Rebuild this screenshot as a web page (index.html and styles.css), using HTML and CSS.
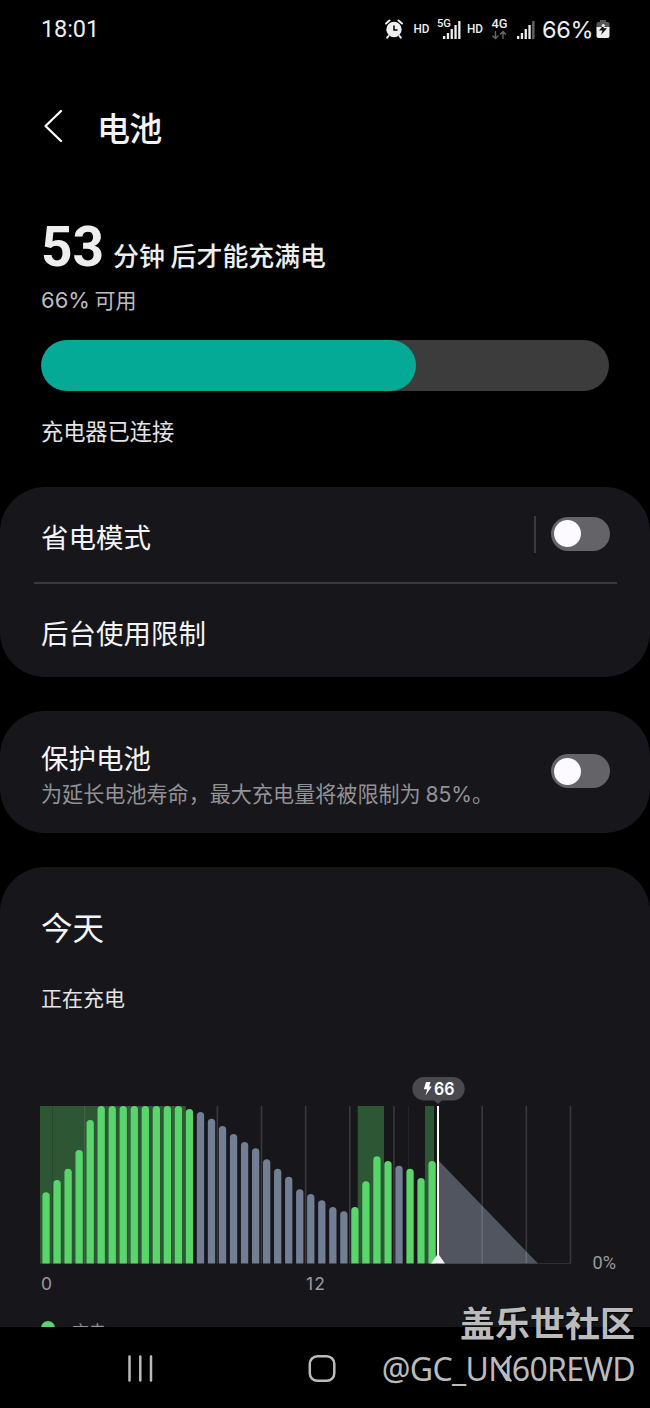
FILE: index.html
```html
<!DOCTYPE html>
<html lang="zh-CN">
<head>
<meta charset="utf-8">
<title>电池</title>
<link rel="stylesheet" href="styles.css">
</head>
<body>
<div class="screen">
  <header class="status">
    <span class="clock">18:01</span>
    <svg class="status-icons" width="156" height="30" viewBox="384 14 156 30">
      <g fill="none" stroke="#eee" stroke-width="2" stroke-linecap="round">
        <path d="M386 23.500l3.500-3M402 23.500l-3.500-3M388.500 36l-1.300 1.700M399.500 36l1.300 1.700"/>
      </g>
      <circle cx="394" cy="29.500" r="7.700" fill="#eee"/>
      <path d="M394 25.500v4.500h3.500" fill="none" stroke="#000" stroke-width="1.5"/>
      <g class="net">
        <text x="413.500" y="33" font-size="12" textLength="16" lengthAdjust="spacingAndGlyphs">HD</text>
        <text x="437" y="27" font-size="11" textLength="14" lengthAdjust="spacingAndGlyphs">5G</text>
        <text x="467" y="33" font-size="12" textLength="16" lengthAdjust="spacingAndGlyphs">HD</text>
        <text x="491.500" y="28" font-size="12.500" textLength="16" lengthAdjust="spacingAndGlyphs">4G</text>
      </g>
      <path d="M443 36h2.300v3h-2.300zM446.800 33h2.300v6h-2.300zM450.600 29h2.300v10h-2.300zM454.400 25h2.300v14h-2.300zM458.200 21h2.300v18h-2.300z" fill="#eee"/>
      <path d="M517 36h2.300v3H517zM520.800 33h2.300v6h-2.300zM524.600 29h2.300v10h-2.300zM528.400 25h2.300v14h-2.300z" fill="#eee"/>
      <path d="M532.200 21h2.300v18h-2.300z" fill="#666"/>
      <path d="M495.500 31v7.500m-3-3 3 3 3-3M503 39v-7.500m-3 3 3-3 3 3" fill="none" stroke="#666" stroke-width="1.4"/>
    </svg>
    <span class="percent">66%</span>
    <svg class="batt" width="14" height="20" viewBox="0 0 14 20">
      <path d="M4 1h6v2h1.500Q13.500 3 13.500 5v5H.500V5Q.500 3 2.500 3H4z" fill="#555"/>
      <path d="M.500 8h13v9q0 2-2 2h-9q-2 0-2-2z" fill="#eee"/>
      <path d="M8.500 5 3 11.500h3.500L5 16l6-6.800H7.500z" fill="#111"/>
      <circle cx="7.300" cy="6.500" r="1.600" fill="#eee"/>
    </svg>
  </header>

  <div class="title-bar">
    <svg width="22" height="36" viewBox="0 0 22 36"><path d="M19 3 3.500 18 19 33" fill="none" stroke="#fff" stroke-width="2.300" stroke-linecap="round" stroke-linejoin="round"/></svg>
    <h1>电池</h1>
  </div>

  <section class="summary">
    <div class="remaining"><b>53</b><span>分钟 后才能充满电</span></div>
    <div class="available"><span class="latin">66%</span> 可用</div>
    <div class="meter"><div class="meter-fill" style="width:66%"></div></div>
    <div class="charger">充电器已连接</div>
  </section>

  <section class="card">
    <div class="row">
      <span class="label">省电模式</span>
      <span class="split"></span>
      <span class="switch"></span>
    </div>
    <hr>
    <div class="row second"><span class="label">后台使用限制</span></div>
  </section>

  <section class="card protect">
    <div class="protect-text">
      <div class="label">保护电池</div>
      <div class="note">为延长电池寿命，最大充电量将被限制为 <span class="latin">85%</span>。</div>
    </div>
    <span class="switch"></span>
  </section>

  <section class="card today">
    <h2>今天</h2>
    <p>正在充电</p>
    <svg class="chart" width="650" height="230" viewBox="0 1070 650 230">
      <g class="grid" id="grid"></g>
      <path class="zone" d="M40 1106h145v157.500H40zM357.700 1106h26.300v157.500h-26.300zM425 1106h9v157.500h-9z"/>
      <path d="M52.500 1106v157.500M185.500 1106v157.500" stroke="#244a2b"/>
      <path d="M84.700 1106v157.500M129 1106v157.500M173 1106v157.500" stroke="#46664b"/>
      <path d="M408.500 1106v157.500" stroke="#24231f"/>
      <path d="M438 1263.500h133" stroke="#303034"/>
      <path d="M438 1160 538 1263.500H438z" fill="#51555f"/>
      <path d="M482.200 1206v57.500M526.300 1252v11" stroke="#6a6d76" stroke-width="1.500"/>
      <g id="bars"></g>
      <path d="M438 1106v157" stroke="#fff" stroke-width="2"/>
      <path d="M438 1253.500 445 1263.500H431z" fill="#f2f2f6"/>
      <path d="M424 1077h29a11.700 11.700 0 0 1 0 23.400h-11l-4 3.600-4-3.600h-10a11.700 11.700 0 0 1 0-23.400z" fill="#4a4a4e"/>
      <path d="M426 1082h4.500l-1.300 4.500h2.600l-6.300 9 1.700-6.300h-3.400z" fill="#fff"/>
      <text x="434" y="1095" class="bubble" textLength="20.500" lengthAdjust="spacingAndGlyphs">66</text>
      <text x="41" y="1290" class="axis">0</text>
      <text x="306" y="1290" class="axis" textLength="19">12</text>
      <text x="592.500" y="1269" class="axis pct" textLength="23.500" lengthAdjust="spacingAndGlyphs">0%</text>
    </svg>
    <div class="legend"><i></i><span>充电</span></div>
  </section>

  <nav>
    <svg width="650" height="81" viewBox="0 1327 650 81" fill="none" stroke="#bbb" stroke-width="2.500" stroke-linecap="round">
      <path d="M129.500 1356.500v24M140.300 1356.500v24M151 1356.500v24"/>
      <rect x="309.800" y="1356.300" width="24.500" height="24.500" rx="7.500"/>
      <path d="M510.500 1356.500 500 1368.500 510.500 1380.500" stroke-linejoin="round"/>
    </svg>
  </nav>

  <div class="watermark">
    <div class="community">盖乐世社区</div>
    <div class="handle">@GC_UN60REWD</div>
  </div>
</div>
<script src="chart.js"></script>
</body>
</html>
```

FILE: styles.css
```css
* { box-sizing: border-box; margin: 0; padding: 0; }
body { background: #000; }
.screen {
  position: relative;
  width: 650px;
  height: 1408px;
  overflow: hidden;
  background: #000;
  color: #f4f4f6;
  font-family: "Noto Sans CJK SC", sans-serif;
}
.latin { font-family: Inter, sans-serif; }

.status { display: flex; align-items: center; height: 58px; padding-left: 41px; font-family: Inter, sans-serif; color: #eee; }
.clock { width: 343px; font-family: Roboto, sans-serif; font-size: 23.5px; letter-spacing: -0.1px; }
.status-icons { flex: none; }
.net text { fill: #eee; font-family: Roboto, sans-serif; font-weight: 500; }
.percent { width: 56px; padding-left: 2px; font-size: 23.5px; letter-spacing: -0.3px; }

.title-bar { display: flex; align-items: center; gap: 33px; height: 136px; padding-left: 42px; }
.title-bar h1 { font-size: 33px; line-height: 40px; font-weight: 500; letter-spacing: -0.8px; padding-top: 2px; }

.summary { height: 293px; padding: 18px 41px 0; }
.remaining { display: flex; align-items: baseline; height: 70px; line-height: 70px; gap: 9px; }
.remaining b { font: 700 55px/70px Roboto, sans-serif; width: 63px; color: #eee; }
.remaining span { font-size: 25.9px; font-weight: 500; color: #eee; white-space: nowrap; }
.available { height: 35px; font-size: 21px; line-height: 35px; color: #bdbdc1; }
.available .latin { font-size: 22px; }
.meter { height: 51px; margin-top: 23px; border-radius: 26px; background: #3c3c3c; overflow: hidden; width: 568px; }
.meter-fill { height: 100%; border-radius: 26px; background: #04aa96; }
.charger { margin-top: 23px; font-size: 22.2px; line-height: 32px; color: #e4e4e6; }

.card { background: #17171b; border-radius: 45px; height: 190px; margin-bottom: 34px; }
.row { display: flex; align-items: center; height: 95px; padding: 0 40px 0 41px; }
.label { font-size: 27.5px; line-height: 40px; font-weight: 400; }
.row .label { flex: 1; padding-top: 2px; }
.split { width: 2px; height: 37px; margin-right: 15px; background: #3c3c40; }
.switch { flex: none; width: 59px; height: 34px; margin-bottom: 2px; padding: 3.5px 3px; border-radius: 17px; background: #646468; }
.switch::before { content: ""; display: block; width: 27px; height: 27px; border-radius: 50%; background: #fcfaff; }
.card hr { height: 2px; margin: 0 33.5px; border: 0; background: #3a3a3e; }
.row.second { height: 93px; }
.protect { display: flex; height: 122px; padding: 0 40px 0 41px; align-items: center; }
.protect-text { flex: 1; padding-top: 4px; }
.note { font-size: 21.1px; line-height: 32px; color: #929296; white-space: nowrap; }

.today { height: 461px; margin: 0; border-radius: 45px 45px 0 0; overflow: hidden; }
.today h2 { padding: 36px 41px 0; font-size: 31.5px; line-height: 46px; font-weight: 400; }
.today p { height: 82px; padding: 31px 41px 0; font-size: 21px; line-height: 34px; color: #e4e4e6; }
.chart { display: block; margin-top: 39px; }
.grid { stroke: #39393d; stroke-width: 1.6; }
.zone { fill: #2c5634; }
.bar-charge { fill: #59d56b; }
.bar-idle { fill: #727e94; }
.bubble { font: 600 17px Inter, sans-serif; fill: #fff; }
.axis { font: 17.5px Inter, sans-serif; fill: #99999d; }
.axis.pct { font-family: Roboto, sans-serif; font-size: 19px; }
.legend { display: flex; gap: 17px; height: 40px; padding: 18px 41px 0; font-size: 17px; line-height: 26px; color: #929296; }
.legend i { width: 14px; height: 14px; margin-top: 3px; border-radius: 50%; background: #59d56b; }

nav { position: absolute; left: 0; top: 1327px; height: 81px; background: #000; }
nav svg { display: block; }
.watermark { position: absolute; right: 15px; top: 1299px; text-align: right; color: #bbb; white-space: nowrap; }
.community { font-size: 35px; line-height: 46px; font-weight: 700; text-shadow: 1px 1px 1px #000; }
.handle { padding-top: 2px; font: 32px/44px "Noto Sans", sans-serif; letter-spacing: -0.7px; }
```

FILE: chart.js
```js
const NS = "http://www.w3.org/2000/svg";
const BASE = 1263.5;
const tops = [
  1192.3, 1180, 1168.7, 1150, 1120, 1106, 1106, 1106, 1106, 1106, 1106, 1106, 1106, 1109,
  1112, 1118.7, 1126, 1134, 1142, 1148.3, 1159.3, 1168.7, 1176.7, 1189.3, 1194, 1200.3, 1207, 1211.3,
  1207, 1181.3, 1156.3, 1161, 1165.7, 1168.7, 1178, 1161
];
const isIdle = i => (i > 13 && i < 28) || i === 32;

function add(parent, name, attrs) {
  const el = document.createElementNS(NS, name);
  for (const key in attrs) el.setAttribute(key, attrs[key]);
  parent.appendChild(el);
}

const grid = document.getElementById("grid");
for (let i = 0; i <= 12; i++) {
  const x = 40.8 + i * 44.14;
  add(grid, "path", { d: `M${x} 1106V${BASE}` });
}

const bars = document.getElementById("bars");
tops.forEach((top, i) => {
  const x = 42.4 + i * 11.03;
  add(bars, "path", {
    d: `M${x} ${BASE}V${top + 3.6}a3.65 3.65 0 0 1 7.3 0V${BASE}z`,
    class: isIdle(i) ? "bar-idle" : "bar-charge"
  });
});
```
